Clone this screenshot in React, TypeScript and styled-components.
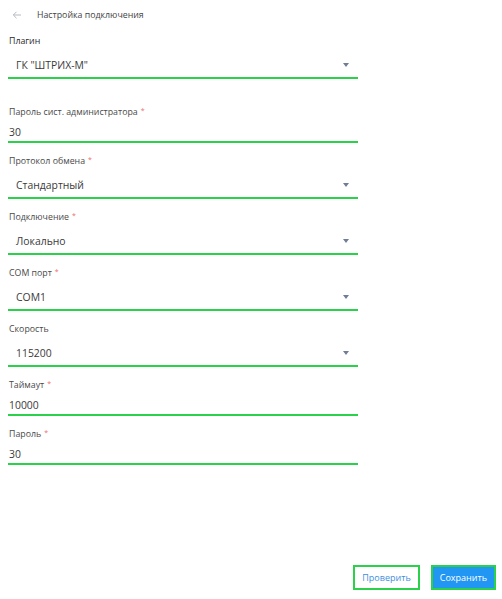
import styled, { createGlobalStyle } from "styled-components";

const GlobalStyle = createGlobalStyle`
  html, body {
    margin: 0;
    padding: 0;
    background: #ffffff;
  }
  body {
    font-family: "Open Sans", "Noto Sans", sans-serif;
    color: #333;
  }
`;

const Page = styled.div`
  min-height: 100vh;
  box-sizing: border-box;
  display: flex;
  flex-direction: column;
  padding: 0 6px 9px 8px;
`;

const Header = styled.header`
  height: 30px;
  display: flex;
  align-items: center;
  gap: 15px;
  padding-left: 4px;
`;

const BackButton = styled.button`
  border: none;
  background: none;
  padding: 0;
  width: 10px;
  height: 10px;
  display: flex;
  align-items: center;
  cursor: pointer;
`;

const Title = styled.h1`
  margin: 0;
  font-size: 8.8px;
  line-height: 14px;
  font-weight: 400;
  color: #444;
`;

const Form = styled.form`
  width: 350px;
  padding-top: 4px;
  display: flex;
  flex-direction: column;
`;

const Field = styled.div<{ $gap: number }>`
  display: flex;
  flex-direction: column;
  margin-bottom: ${(p) => p.$gap}px;
`;

const Label = styled.label<{ $strong?: boolean }>`
  display: block;
  height: 14px;
  font-size: 8.8px;
  line-height: 14px;
  padding-left: 1px;
  color: ${(p) => (p.$strong ? "#2a2a2a" : "#4a4a4a")};
  font-weight: ${(p) => (p.$strong ? 500 : 400)};
`;

const Required = styled.span`
  color: #ef6b6b;
  font-size: 7px;
  line-height: 0;
  margin-left: 3px;
  vertical-align: 2px;
`;

const Control = styled.div<{ $select?: boolean }>`
  display: flex;
  align-items: center;
  justify-content: space-between;
  height: 16px;
  margin-top: ${(p) => (p.$select ? 9 : 5)}px;
  padding: 0 9px ${(p) => (p.$select ? 4 : 1)}px ${(p) => (p.$select ? 8 : 1)}px;
  border-bottom: 2px solid #2bd14a;
  font-size: 10.4px;
  line-height: 16px;
  color: #3a3a3a;
`;

const Caret = styled.span`
  width: 0;
  height: 0;
  border-left: 3.5px solid transparent;
  border-right: 3.5px solid transparent;
  border-top: 4px solid #6f7d98;
`;

const Actions = styled.div`
  margin-top: auto;
  display: flex;
  justify-content: flex-end;
  gap: 11px;
`;

const Button = styled.button<{ $primary?: boolean }>`
  height: 25px;
  padding: 0 7px;
  border: 2px solid #2bd14a;
  background: ${(p) => (p.$primary ? "#2196f3" : "#ffffff")};
  color: ${(p) => (p.$primary ? "#ffffff" : "#3d8fe0")};
  font-family: "Open Sans", "Noto Sans", sans-serif;
  font-size: 9px;
  cursor: pointer;
`;

interface IField {
  label: string;
  value: string;
  select?: boolean;
  required?: boolean;
  strong?: boolean;
  gap?: number;
}

const fields: IField[] = [
  { label: "Плагин", value: "ГК \"ШТРИХ-М\"", select: true, strong: true, gap: 26 },
  { label: "Пароль сист. администратора", value: "30", required: true },
  { label: "Протокол обмена", value: "Стандартный", select: true, required: true },
  { label: "Подключение", value: "Локально", select: true, required: true },
  { label: "COM порт", value: "COM1", select: true, required: true },
  { label: "Скорость", value: "115200", select: true },
  { label: "Таймаут", value: "10000", required: true },
  { label: "Пароль", value: "30", required: true },
];

function App() {
  return (
    <Page>
      <GlobalStyle />
      <Header>
        <BackButton type="button">
          <svg width="10" height="10" viewBox="0 0 10 10">
            <path
              d="M9 5H1.5M4.5 1.8L1.3 5l3.2 3.2"
              fill="none"
              stroke="#b5b9c0"
              strokeWidth="1"
            />
          </svg>
        </BackButton>
        <Title>Настройка подключения</Title>
      </Header>
      <Form>
        {fields.map((f) => (
          <Field key={f.label} $gap={f.gap ?? 11}>
            <Label $strong={f.strong}>
              {f.label}
              {f.required && <Required>*</Required>}
            </Label>
            <Control $select={f.select}>
              <span>{f.value}</span>
              {f.select && <Caret />}
            </Control>
          </Field>
        ))}
      </Form>
      <Actions>
        <Button type="button">Проверить</Button>
        <Button type="button" $primary>
          Сохранить
        </Button>
      </Actions>
    </Page>
  );
}

export default App;
